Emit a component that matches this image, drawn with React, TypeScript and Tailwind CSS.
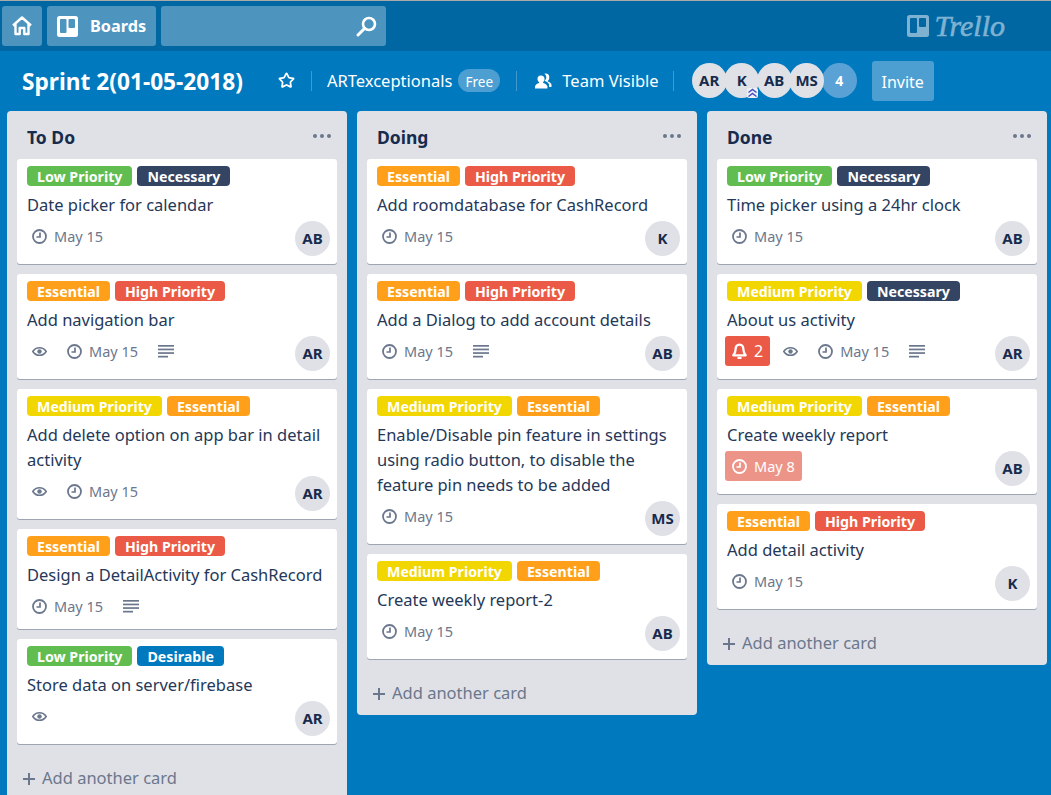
import { Star } from "lucide-react";

type Label = "low" | "necessary" | "essential" | "high" | "medium" | "desirable";

const LABELS: Record<Label, { text: string; cls: string }> = {
  low: { text: "Low Priority", cls: "bg-[#61bd4f]" },
  necessary: { text: "Necessary", cls: "bg-[#344563]" },
  essential: { text: "Essential", cls: "bg-[#ff9f1a]" },
  high: { text: "High Priority", cls: "bg-[#eb5a46]" },
  medium: { text: "Medium Priority", cls: "bg-[#f2d600]" },
  desirable: { text: "Desirable", cls: "bg-[#0079bf]" },
};

type CardData = {
  labels: Label[];
  title: string;
  member?: string;
  date?: string;
  overdue?: boolean;
  watch?: boolean;
  desc?: boolean;
  alerts?: number;
};

const LISTS: { name: string; cards: CardData[] }[] = [
  {
    name: "To Do",
    cards: [
      { labels: ["low", "necessary"], title: "Date picker for calendar", member: "AB", date: "May 15" },
      { labels: ["essential", "high"], title: "Add navigation bar", member: "AR", date: "May 15", watch: true, desc: true },
      { labels: ["medium", "essential"], title: "Add delete option on app bar in detail activity", member: "AR", date: "May 15", watch: true },
      { labels: ["essential", "high"], title: "Design a DetailActivity for CashRecord", date: "May 15", desc: true },
      { labels: ["low", "desirable"], title: "Store data on server/firebase", member: "AR", watch: true },
    ],
  },
  {
    name: "Doing",
    cards: [
      { labels: ["essential", "high"], title: "Add roomdatabase for CashRecord", member: "K", date: "May 15" },
      { labels: ["essential", "high"], title: "Add a Dialog to add account details", member: "AB", date: "May 15", desc: true },
      { labels: ["medium", "essential"], title: "Enable/Disable pin feature in settings using radio button, to disable the feature pin needs to be added", member: "MS", date: "May 15" },
      { labels: ["medium", "essential"], title: "Create weekly report-2", member: "AB", date: "May 15" },
    ],
  },
  {
    name: "Done",
    cards: [
      { labels: ["low", "necessary"], title: "Time picker using a 24hr clock", member: "AB", date: "May 15" },
      { labels: ["medium", "necessary"], title: "About us activity", member: "AR", date: "May 15", watch: true, desc: true, alerts: 2 },
      { labels: ["medium", "essential"], title: "Create weekly report", member: "AB", date: "May 8", overdue: true },
      { labels: ["essential", "high"], title: "Add detail activity", member: "K", date: "May 15" },
    ],
  },
];

const ClockIcon = () => (
  <svg width="15" height="15" viewBox="0 0 15 15" fill="none" stroke="currentColor" strokeWidth="1.800">
    <circle cx="7.500" cy="7.500" r="6.500" />
    <path d="M8 3.500v4.500H4.500" strokeWidth="1.700" />
  </svg>
);

const EyeIcon = () => (
  <svg width="15" height="15" viewBox="0 0 15 15" fill="none" stroke="currentColor">
    <path d="M.8 7.500C2.400 5 4.800 3.700 7.500 3.700s5.100 1.300 6.700 3.800c-1.600 2.500-4 3.800-6.700 3.800S2.400 10 .8 7.500z" strokeWidth="1.600" />
    <circle cx="7.500" cy="7.500" r="2.200" fill="currentColor" stroke="none" />
  </svg>
);

const DescIcon = () => (
  <svg width="16" height="15" viewBox="0 0 16 15" fill="currentColor">
    <rect x="0" y="1" width="16" height="1.700" />
    <rect x="0" y="4.600" width="16" height="1.700" />
    <rect x="0" y="8.200" width="16" height="1.700" />
    <rect x="0" y="11.800" width="10" height="1.700" />
  </svg>
);

const BellIcon = () => (
  <svg width="15" height="16" viewBox="0 0 15 16" fill="none" stroke="currentColor" strokeWidth="2.300">
    <path d="M1.300 12.300h12.400c-1.300-1.300-2.200-2.600-2.200-5.200 0-3.200-1.500-5.500-4-5.500s-4 2.300-4 5.500c0 2.600-.9 3.900-2.200 5.200z" strokeLinejoin="round" />
    <path d="M5.500 15h4" />
  </svg>
);

const TeamIcon = () => (
  <svg width="17" height="16" viewBox="0 0 17 16" fill="white">
    <path d="M10.500 0.500a3.800 3.800 0 0 1 3.800 3.900c0 1.500-.6 2.700-1.500 3.400v.8c1.900.5 3.200 1.500 3.700 3v2.400h-2.400v-2.700c-.7-1.600-2.300-2.700-4.300-3.300V7.200c1-.7 1.500-1.800 1.500-3 0-1-.4-2-1.100-2.700-.3-.3-.6-.5-1-.7.600-.2 1.500-.3 2.300-.3z" />
    <path d="M6 2.400a3.500 3.500 0 0 1 3.500 3.600c0 1.300-.5 2.400-1.400 3v1c2.200.5 3.800 1.600 4.300 3.300V15.500H0v-2.200c.5-1.700 2.100-2.800 4-3.300V9c-.9-.6-1.500-1.700-1.500-3A3.500 3.500 0 0 1 6 2.400z" />
  </svg>
);

const Avatar = ({ text, badge }: { text: string; badge?: boolean }) => (
  <div className="relative flex h-[35px] w-[35px] shrink-0 items-center justify-center rounded-full bg-[#dfe1e6] text-[15px] font-bold text-[#172b4d]">
    {text}
    {badge && (
      <svg className="absolute bottom-0 left-[23px] z-10 rounded-[2px] bg-[#eef0f6]" width="11" height="10" viewBox="0 0 11 10" fill="none" stroke="#4a4fc4" strokeWidth="1.500">
        <path d="M1.500 4.500l4-3 4 3M1.500 8.500l4-3 4 3" />
      </svg>
    )}
  </div>
);

const Card = ({ card }: { card: CardData }) => (
  <div className="rounded-[3px] bg-white pt-[7px] shadow-[0_1px_0_rgba(9,30,66,0.3)]">
    <div className="flex gap-[5px] pl-[10px]">
      {card.labels.map((l) => (
        <span key={l} className={`flex h-5 items-center rounded-[4px] px-[10px] pt-[2px] text-[14.2px] font-bold text-white ${LABELS[l].cls}`}>
          {LABELS[l].text}
        </span>
      ))}
    </div>
    <div className="mt-[6px] px-[10px] text-[16.5px] leading-[25px] text-[#253858]">{card.title}</div>
    <div className="mt-1 flex items-start justify-between pb-2 pl-2 pr-[7px]">
      <div className="flex gap-[6px] text-[14.5px] text-[#6b778c]">
        {card.alerts && (
          <span className="flex h-[30px] items-center gap-[7px] rounded-[3px] bg-[#eb5a46] px-[7px] text-[16px] text-white">
            <BellIcon />
            {card.alerts}
          </span>
        )}
        {card.watch && (
          <span className="flex h-[30px] items-center px-[7px]">
            <EyeIcon />
          </span>
        )}
        {card.date && (
          <span className={`flex h-[30px] items-center gap-[7px] rounded-[3px] px-[7px] ${card.overdue ? "bg-[#ec9488] text-white" : ""}`}>
            <ClockIcon />
            <span className="pt-[2px]">{card.date}</span>
          </span>
        )}
        {card.desc && (
          <span className="flex h-[30px] items-center px-[7px]">
            <DescIcon />
          </span>
        )}
      </div>
      {card.member && <Avatar text={card.member} />}
    </div>
  </div>
);

export default function App() {
  return (
    <div className="flex h-[795px] flex-col overflow-hidden bg-[#0079bf] font-['Noto_Sans',sans-serif]">
      <header className="flex h-[51px] shrink-0 items-center gap-[5px] border-t border-[#aaaaaa] bg-[#0067a3] pl-[2px] text-white">
        <button className="flex h-10 w-10 items-center justify-center rounded-[3px] bg-[#4d95bf]">
          <svg width="22" height="22" viewBox="0 0 22 22" fill="none" stroke="currentColor" strokeWidth="2.400" strokeLinejoin="round">
            <path d="M2 10.500L11 2.500l9 8M4.500 9v10h4.200v-6h4.600v6h4.200V9" />
          </svg>
        </button>
        <button className="flex h-10 w-[109px] items-center rounded-[3px] bg-[#4d95bf] pl-[10px] text-[16.3px] font-bold">
          <svg width="21" height="21" viewBox="0 0 21 21">
            <rect width="21" height="21" rx="2.500" fill="white" />
            <rect x="3" y="3" width="6.500" height="14" rx="1" fill="#4d95bf" />
            <rect x="11.500" y="3" width="6.500" height="9" rx="1" fill="#4d95bf" />
          </svg>
          <span className="ml-3">Boards</span>
        </button>
        <div className="flex h-10 w-[225px] items-center justify-end rounded-[3px] bg-[#4d95bf] pr-[9px]">
          <svg width="21" height="21" viewBox="0 0 21 21" fill="none" stroke="white" strokeWidth="2.600" strokeLinecap="round">
            <circle cx="13" cy="8" r="6" />
            <path d="M8.500 12.500L2 19" strokeWidth="3" />
          </svg>
        </div>
        <div className="ml-auto mr-[46px] flex items-center gap-[5px] text-[#7fb2d1]">
          <svg width="22" height="22" viewBox="0 0 22 22">
            <rect width="22" height="22" rx="2.500" fill="currentColor" />
            <rect x="3" y="3" width="7" height="15" rx="1" fill="#0067a3" />
            <rect x="12" y="3" width="7" height="9" rx="1" fill="#0067a3" />
          </svg>
          <span className="font-['Liberation_Serif',serif] text-[30px] leading-none italic [-webkit-text-stroke:0.6px_#7fb2d1]">Trello</span>
        </div>
      </header>

      <div className="flex h-[59px] shrink-0 items-center pl-[22px] text-white">
        <h1 className="pt-[3px] text-[22.7px] font-bold">Sprint 2(01-05-2018)</h1>
        <Star className="ml-[35px] h-[17px] w-[17px]" strokeWidth={2.5} />
        <span className="ml-4 mr-[15px] h-5 w-px bg-white/25" />
        <span className="pt-[2px] text-[16.5px]">ARTexceptionals</span>
        <span className="ml-[6px] flex h-[23px] w-[42px] items-center justify-center rounded-full bg-[#4d9fd2] pt-[3px] text-[13.5px]">Free</span>
        <span className="mx-4 h-5 w-px bg-white/25" />
        <span className="ml-[2px]">
          <TeamIcon />
        </span>
        <span className="ml-[10px] pt-[2px] text-[16.5px]">Team Visible</span>
        <span className="ml-[14px] mr-[18px] h-5 w-px bg-white/25" />
        <div className="flex items-center -space-x-[2.5px]">
          <Avatar text="AR" />
          <Avatar text="K" badge />
          <Avatar text="AB" />
          <Avatar text="MS" />
          <div className="flex h-[35px] w-[35px] items-center justify-center rounded-full bg-[#5aa2d6] text-[14px] font-bold">4</div>
        </div>
        <button className="ml-[15px] flex h-10 w-[62px] items-center justify-center rounded-[3px] bg-[#4d9fd2] pt-[2px] text-[16px]">Invite</button>
      </div>

      <main className="mt-px flex items-start gap-[10px] pl-[7px]">
        {LISTS.map((list) => (
          <section key={list.name} className="w-[340px] shrink-0 rounded-[4px] bg-[#dfe1e6]">
            <div className="flex h-12 items-center justify-between pr-[16px] pl-5 pt-1 text-[#172b4d]">
              <h2 className="text-[17.5px] font-bold">{list.name}</h2>
              <svg className="-mt-[2px]" width="18" height="4" viewBox="0 0 18 4" fill="#6b778c">
                <circle cx="2" cy="2" r="2" />
                <circle cx="9" cy="2" r="2" />
                <circle cx="16" cy="2" r="2" />
              </svg>
            </div>
            <div className="flex flex-col gap-[10px] px-[10px]">
              {list.cards.map((card) => (
                <Card key={card.title} card={card} />
              ))}
            </div>
            <div className="flex h-14 items-center pl-[15px] pt-[13px] text-[16.5px] text-[#6b778c]">
              <svg className="mr-[6px]" width="14" height="14" viewBox="0 0 14 14" stroke="currentColor" strokeWidth="2">
                <path d="M7 1v12M1 7h12" />
              </svg>
              Add another card
            </div>
          </section>
        ))}
      </main>
    </div>
  );
}
